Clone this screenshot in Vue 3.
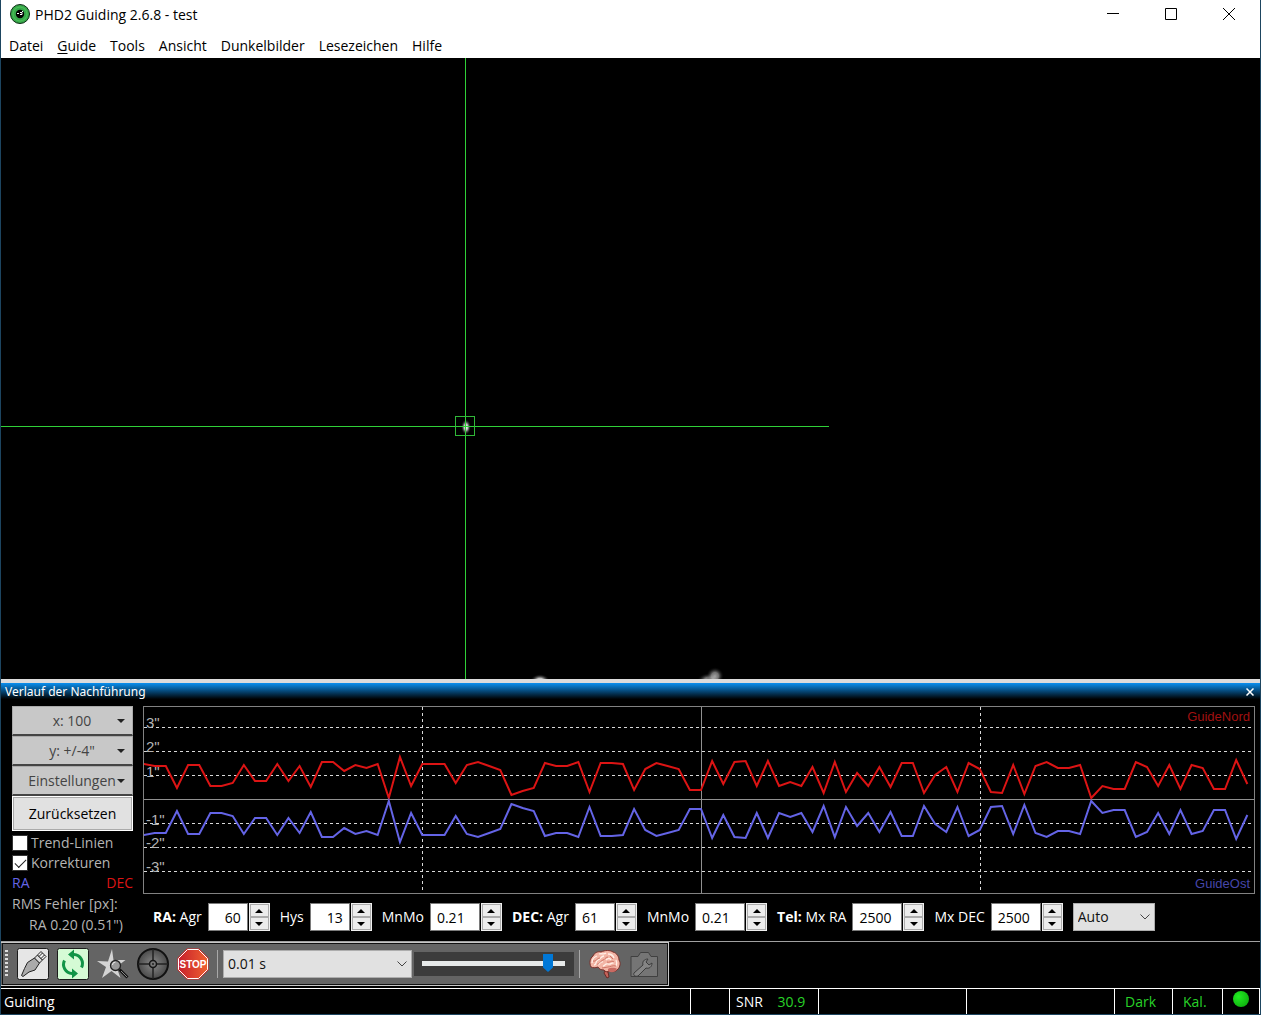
<template>
  <div class="window">
    <header class="title-bar">
      <svg class="app-icon" viewBox="0 0 20 20" aria-hidden="true">
        <circle cx="10" cy="10" r="9.5" fill="#36a84a" stroke="#0d2b14" />
        <circle cx="10" cy="10" r="7" fill="none" stroke="#4fc25a" />
        <circle cx="10" cy="10" r="4.2" fill="#000" />
        <path d="M7 9.500h2M10 8.500h2v2h-2M12 7.500h1" stroke="#fff" fill="none" />
      </svg>
      <h1>PHD2 Guiding 2.6.8 - test</h1>
      <div class="window-buttons">
        <button type="button" aria-label="Minimieren">
          <svg viewBox="0 0 12 12"><path d="M0 5.500h12" /></svg>
        </button>
        <button type="button" aria-label="Maximieren">
          <svg viewBox="0 0 12 12"><path d="M.5.5h11v11H.5z" /></svg>
        </button>
        <button type="button" aria-label="Schließen">
          <svg viewBox="0 0 12 12"><path d="M0 0l12 12M12 0L0 12" /></svg>
        </button>
      </div>
    </header>

    <nav class="menu-bar">
      <button type="button">Datei</button>
      <button type="button"><u>G</u>uide</button>
      <button v-for="item in menuItems" :key="item" type="button">{{ item }}</button>
    </nav>

    <main class="camera-view">
      <svg class="camera-image" role="img" aria-label="Kamerabild">
        <defs>
          <radialGradient id="star">
            <stop offset="0" stop-color="#fff" />
            <stop offset="0.4" stop-color="#bbb" />
            <stop offset="1" stop-color="#000" stop-opacity="0" />
          </radialGradient>
        </defs>
        <ellipse cx="465" cy="369" rx="5" ry="8" fill="url(#star)" />
        <svg y="100%" overflow="visible">
          <ellipse cx="539" cy="2" rx="10" ry="7" fill="url(#star)" />
          <ellipse cx="708" cy="1" rx="12" ry="7" fill="url(#star)" opacity="0.6" />
          <ellipse cx="714" cy="-3" rx="9" ry="9" fill="url(#star)" opacity="0.6" />
        </svg>
        <rect class="cross" x="0" y="368" width="828" height="1" />
        <rect class="cross" x="464" y="0" width="1" height="100%" />
        <rect class="lock-box" x="454.5" y="358.5" width="19" height="19" />
      </svg>
    </main>

    <section class="history">
      <div class="caption">
        <h2>Verlauf der Nachführung</h2>
        <button type="button" aria-label="Bereich schließen">
          <svg viewBox="0 0 8 8"><path d="M.5.5l7 7M7.500.5l-7 7" /></svg>
        </button>
      </div>

      <div class="history-body">
        <aside class="side">
          <button v-for="label in dropButtons" :key="label" type="button" class="drop-button">
            <span>{{ label }}</span>
            <svg viewBox="0 0 8 4"><path d="M0 0h8L4 4z" /></svg>
          </button>
          <button type="button" class="reset-button">Zurücksetzen</button>
          <label class="check"><input v-model="trendLines" type="checkbox" />Trend-Linien</label>
          <label class="check"><input v-model="corrections" type="checkbox" />Korrekturen</label>
          <div class="legend"><span class="ra">RA</span><span class="dec">DEC</span></div>
          <p>RMS Fehler [px]:</p>
          <p class="rms">RA 0.20 (0.51")</p>
          <p class="rms rms-dec">DEC 0.20 (0.51")</p>
        </aside>

        <div class="graph-column">
          <svg class="graph" role="img" aria-label="Verlauf RA und DEC">
            <svg width="100%" height="186" viewBox="0 0 1110 186" preserveAspectRatio="none">
              <path class="dashed" d="M278.500 0V186M836.500 0V186" />
              <path class="axis" d="M557.500 0V186" />
            </svg>
            <line v-for="y in gridLines" :key="y" class="dashed" x1="0" :y1="y" x2="100%" :y2="y" />
            <line class="axis" x1="0" y1="92.5" x2="100%" y2="92.5" />
            <text v-for="t in scaleLabels" :key="t.text" class="scale" x="2" :y="t.y">{{ t.text }}</text>
            <svg width="100%" height="186" viewBox="0 0 1110 186" preserveAspectRatio="none">
              <polyline class="dec-line" :points="decPoints" />
              <polyline class="ra-line" :points="raPoints" />
            </svg>
            <text class="direction dec" x="100%" y="14" dx="-4">GuideNord</text>
            <text class="direction ra" x="100%" y="181" dx="-4">GuideOst</text>
          </svg>

          <form class="settings" @submit.prevent>
            <div v-for="field in fields" :key="field.id" class="field">
              <label :for="field.id"><b v-if="field.group">{{ field.group }}</b>{{ field.label }}</label>
              <input
                :id="field.id"
                v-model="field.value"
                type="text"
                :class="[field.size, { right: field.right }]"
              />
              <div class="spin">
                <button type="button" :aria-label="field.label + ' erhöhen'">
                  <svg viewBox="0 0 8 4"><path d="M0 4h8L4 0z" /></svg>
                </button>
                <button type="button" :aria-label="field.label + ' verringern'">
                  <svg viewBox="0 0 8 4"><path d="M0 0h8L4 4z" /></svg>
                </button>
              </div>
            </div>
            <div class="select mode">
              <select aria-label="DEC Modus">
                <option>Auto</option>
              </select>
              <svg viewBox="0 0 10 6"><path d="M.5.5L5 5L9.500.5" /></svg>
            </div>
          </form>
        </div>
      </div>
    </section>

    <div class="toolbar">
      <span class="grip"></span>
      <div class="tools">
        <button type="button" aria-label="Verbinden">
          <svg viewBox="0 0 32 32">
            <rect x=".5" y=".5" width="31" height="31" rx="2" fill="#e6e6e6" stroke="#1c1c1c" />
            <g stroke="#222" stroke-linejoin="round">
              <path d="M4.500 27.500l3-7 3-6 7-4.500 5 5-4.500 7-6 2-6 4.500z" fill="#aaa" />
              <path d="M17.500 10l3-3 5 5-3 3z" fill="#ddd" />
              <path d="M20.500 7l3.500-3.500 5 5-3.500 3.500zM22 8.500l3.500-3.500M24 10.500l3.500-3.500" fill="#f2f2f2" />
            </g>
          </svg>
        </button>
        <button type="button" aria-label="Belichtung wiederholen">
          <svg viewBox="0 0 32 32">
            <rect x=".5" y=".5" width="31" height="31" rx="2" fill="#d5fbd5" stroke="#1c1c1c" />
            <g fill="none" stroke="#119447" stroke-width="3">
              <path d="M15 6.500h2a9 9 0 0 1 7.500 13" />
              <path d="M17 25.500h-2a9 9 0 0 1-7.500-13" />
            </g>
            <path d="M17 1.500v10l-6-5zM15 30.500v-10l6 5z" fill="#119447" />
          </svg>
        </button>
        <button type="button" aria-label="Leitstern wählen">
          <svg viewBox="0 0 32 32">
            <path d="M15 1l1.500 11 12 0-9 7 4 11-9-7-9.500 7 4-11-9-6 11 .5z" fill="#d4d4d4" />
            <circle cx="18.500" cy="17.500" r="5" fill="#999" stroke="#222" stroke-width="1.300" />
            <path d="M15.500 17a3 3 0 0 1 3-3" fill="none" stroke="#eee" />
            <path d="M22.500 21.500l8 8" stroke="#111" stroke-width="3" />
            <path d="M24 23l6 6" stroke="#888" />
          </svg>
        </button>
        <button type="button" aria-label="Nachführen">
          <svg viewBox="0 0 32 32">
            <defs>
              <radialGradient id="reticle">
                <stop offset="0" stop-color="#8a8a8a" />
                <stop offset="1" stop-color="#4a4a4a" />
              </radialGradient>
            </defs>
            <circle cx="16" cy="16" r="15" fill="url(#reticle)" stroke="#111" stroke-width="2" />
            <path d="M16 1v30M1 16h30" stroke="#222" stroke-width="1.500" />
            <circle cx="16" cy="16" r="3.500" fill="#777" stroke="#151515" stroke-width="1.500" />
            <circle cx="16" cy="16" r="1" fill="#222" />
          </svg>
        </button>
        <button type="button" aria-label="Stopp">
          <svg viewBox="0 0 32 32">
            <defs>
              <linearGradient id="stop-fill">
                <stop offset="0" stop-color="#c8202c" />
                <stop offset="1" stop-color="#ee6030" />
              </linearGradient>
            </defs>
            <path d="M10 .5h12l9.500 9.500v12L22 31.500H10L.5 22V10z" fill="#d42a2a" />
            <path
              d="M10.500 1.500h11l9 9v11l-9 9h-11l-9-9v-11z"
              fill="url(#stop-fill)"
              stroke="#fff"
            />
            <text class="stop-text" x="16" y="20">STOP</text>
          </svg>
        </button>
      </div>
      <span class="separator"></span>
      <div class="select exposure">
        <select aria-label="Belichtungszeit">
          <option>0.01 s</option>
        </select>
        <svg viewBox="0 0 10 6"><path d="M.5.5L5 5L9.500.5" /></svg>
      </div>
      <div class="gamma">
        <input v-model="gamma" type="range" min="0" max="100" aria-label="Gamma" />
      </div>
      <span class="separator"></span>
      <div class="tools tools-end">
        <button type="button" aria-label="Erweiterte Einstellungen">
          <svg viewBox="0 0 32 32">
            <path
              d="M16 23l3 1 1 5-2 1-3-5z"
              fill="#c4635a"
              stroke="#5c1d1a"
              stroke-width=".8"
            />
            <path
              d="M2 19C0 15 1 10 4 8c1-3 5-5 8-4 4-2 9-2 12 0 4 1 6 5 6 8 2 3 1 7-1 9-2 3-6 3-8 2-3 1-5 1-6-1-3 0-5-1-6-3-3 1-5 1-7 0z"
              fill="#f3b5a6"
              stroke="#7a2f2a"
            />
            <path d="M19 21c3-2 8-1 9 0-2 4-6 4-9 2z" fill="#c96a62" />
            <g fill="none" stroke="#fff0e8" stroke-width="1.300">
              <path d="M3 15c0-4 2-6 5-7M5 17c3 0 1-4 4-5s3-4 6-4M9 17c2-1 2-4 5-3M10 6c3-1 5 1 7-1M19 6c3 0 5 1 6 4M14 18c2 0 2-3 5-2s4-2 6-1M17 12c2-2 4-2 5 0M27 12c1 2 1 4 0 6" />
            </g>
            <g fill="none" stroke="#cf7465">
              <path d="M4 13c3 1 4-3 7-3M8 16c2 1 3-3 6-4 2 0 2-3 5-3M13 20c2 0 4-1 6-1s5-2 8-1M18 14c3 1 4-2 7 0M21 8l3 3" />
            </g>
          </svg>
        </button>
        <button type="button" aria-label="Kameraeinstellungen">
          <svg viewBox="0 0 32 32">
            <path
              d="M2 8.500h7l2.500-4h8l2.500 4h6.500v20H2z"
              fill="#757575"
              stroke="#404040"
              stroke-linejoin="round"
            />
            <path
              d="M5 25l9-8c-1-3 1-6 5-6l-2 3 3 3 3-2c0 4-3 6-6 5l-8 8c-3 1-5-1-4-3z"
              fill="#858585"
              stroke="#3c3c3c"
            />
          </svg>
        </button>
      </div>
    </div>

    <footer class="status-bar">
      <span class="message">Guiding</span>
      <span class="w-small"></span>
      <span class="w-snr">SNR <em>30.9</em></span>
      <span class="w-large"></span>
      <span class="w-large"></span>
      <span class="w-dark"><em>Dark</em></span>
      <span class="w-cal"><em>Kal.</em></span>
      <span class="w-led"><i></i></span>
    </footer>
  </div>
</template>

<script setup>
import { computed, reactive, ref } from 'vue'

const menuItems = ['Tools', 'Ansicht', 'Dunkelbilder', 'Lesezeichen', 'Hilfe']
const dropButtons = ['x: 100', 'y: +/-4"', 'Einstellungen']

const trendLines = ref(false)
const corrections = ref(true)
const gamma = ref(91)

const fields = reactive([
  { id: 'ra-agr', group: 'RA: ', label: 'Agr', value: '60', size: 'short', right: true },
  { id: 'ra-hys', label: 'Hys', value: '13', size: 'short', right: true },
  { id: 'ra-mnmo', label: 'MnMo', value: '0.21', size: 'long' },
  { id: 'dec-agr', group: 'DEC: ', label: 'Agr', value: '61', size: 'short' },
  { id: 'dec-mnmo', label: 'MnMo', value: '0.21', size: 'long' },
  { id: 'mx-ra', group: 'Tel: ', label: 'Mx RA', value: '2500', size: 'long' },
  { id: 'mx-dec', label: 'Mx DEC', value: '2500', size: 'long' },
])

const gridLines = [20.5, 44.5, 68.5, 116.5, 140.5, 164.5]
const scaleLabels = [
  { text: '3"', y: 21 },
  { text: '2"', y: 45 },
  { text: '1"', y: 70 },
  { text: '-1"', y: 118 },
  { text: '-2"', y: 141 },
  { text: '-3"', y: 165 },
]

// DEC samples in graph units, RA runs mirrored around the zero line
const samples = [
  58, 60, 60, 82, 59, 59, 80, 80, 77, 59, 75, 75, 58, 75, 60, 81, 56, 56, 65, 59,
  62, 58, 92, 51, 80, 58, 58, 58, 77, 59, 56, 60, 64, 89, 85, 82, 57, 60, 60, 56,
  86, 57, 57, 58, 84, 63, 57, 60, 63, 84, 84, 55, 78, 56, 55, 80, 55, 80, 76, 80,
  61, 87, 56, 86, 67, 80, 61, 81, 57, 57, 87, 69, 61, 86, 57, 63, 86, 87, 59, 88,
  60, 56, 62, 62, 59, 92, 80, 83, 83, 56, 61, 80, 59, 83, 59, 62, 83, 83, 54, 78,
]
const step = 11.15

const decPoints = computed(() => samples.map((y, i) => `${i * step - 0.5},${y - 1}`).join(' '))
const raPoints = computed(() => samples.map((y, i) => `${i * step - 0.5},${186 - y}`).join(' '))
</script>

<style>
body {
  margin: 0;
  background: #000;
}
</style>

<style scoped>
* {
  box-sizing: border-box;
}

.window {
  display: flex;
  flex-direction: column;
  height: 100vh;
  border: 1px solid #1d4560;
  border-top: 0;
  background: #000;
  color: #fff;
  font-family: "Open Sans", "Noto Sans", sans-serif;
  font-size: 14px;
  line-height: 20px;
}

button,
input,
select {
  font: inherit;
  border-radius: 0;
}

button {
  padding: 0;
  border: 0;
  background: none;
  color: inherit;
}

h1,
h2,
p {
  margin: 0;
  font-size: inherit;
  font-weight: 400;
}

svg {
  display: block;
}

/* title and menu */
.title-bar {
  display: flex;
  align-items: center;
  height: 28px;
  padding: 0 2px 0 9px;
  background: #fff;
  color: #000;
}

.title-bar h1 {
  padding-top: 1px;
}

.app-icon {
  width: 20px;
  height: 20px;
  margin-right: 5px;
}

.window-buttons {
  display: flex;
  margin-left: auto;
}

.window-buttons button {
  display: grid;
  place-items: center;
  width: 58px;
  height: 28px;
}

.window-buttons svg {
  width: 12px;
  height: 12px;
  stroke: #000;
  fill: none;
}

.menu-bar {
  display: flex;
  gap: 14px;
  align-items: center;
  height: 30px;
  padding: 6px 8px 0;
  background: #fff;
  color: #000;
}

.menu-bar u {
  text-underline-offset: 2px;
}

/* camera image */
.camera-view {
  flex: 1;
  min-height: 0;
}

.camera-image {
  width: 100%;
  height: 100%;
}

.cross {
  fill: #30d038;
}

.lock-box {
  fill: none;
  stroke: #30b838;
}

/* history pane */
.history {
  border-top: 4px solid #dcdcdc;
  border-bottom: 1px solid #a0a0a0;
}

.caption {
  display: flex;
  align-items: center;
  justify-content: space-between;
  height: 18px;
  padding: 0 6px 0 4px;
  background: linear-gradient(#0a90f0, #000 90%);
}

.caption h2 {
  font-family: "Noto Sans", sans-serif;
  font-size: 12px;
}

.caption svg {
  width: 8px;
  height: 8px;
  stroke: #fff;
  stroke-width: 1.5;
}

.history-body {
  display: flex;
  gap: 10px;
  height: 240px;
  padding: 5px 5px 0 11px;
  overflow: hidden;
}

.side {
  width: 121px;
  flex: none;
  color: #b4b4b4;
}

.drop-button {
  display: flex;
  align-items: center;
  width: 100%;
  height: 30px;
  padding: 1px 7px 0 0;
  border: 1px solid #aaa;
  border-bottom: 2px solid #444;
  background: #c8c8c8;
  color: #444;
}

.drop-button span {
  flex: 1;
  padding-left: 14px;
  white-space: nowrap;
}

.drop-button svg {
  width: 8px;
  height: 4px;
  fill: #222;
}

.reset-button {
  width: 100%;
  height: 35px;
  border: 1px solid #fff;
  outline: 1px solid #aaa;
  outline-offset: -2px;
  background: #e1e1e1;
  color: #000;
}

.check {
  display: flex;
  align-items: center;
  gap: 3px;
  height: 20px;
}

.reset-button + .check {
  margin-top: 2px;
}

.check input {
  appearance: none;
  width: 16px;
  height: 16px;
  margin: 0;
  border: 1px solid #333;
  background: #fff;
}

.check input:checked::before {
  content: "";
  display: block;
  width: 10px;
  height: 5px;
  margin: 3px 2px;
  border: solid #222;
  border-width: 0 0 1px 1px;
  transform: rotate(-45deg);
}

.legend {
  display: flex;
  justify-content: space-between;
}

.legend .ra {
  color: #6464e6;
}

.legend .dec {
  color: #dc1414;
}

.side p {
  line-height: 21px;
  white-space: nowrap;
}

.side .rms {
  padding-left: 17px;
}

.side .rms-dec {
  padding-left: 9px;
}

.graph-column {
  flex: 1;
  min-width: 0;
}

.graph {
  width: 100%;
  height: 188px;
  border: 1px solid #828282;
}

.dashed,
.axis {
  fill: none;
  stroke: #d8d8d8;
  shape-rendering: crispEdges;
  vector-effect: non-scaling-stroke;
}

.dashed {
  stroke-dasharray: 3 3;
}

.axis {
  stroke: #909090;
}

.dec-line,
.ra-line {
  fill: none;
  stroke: #dc1414;
  stroke-width: 2;
  vector-effect: non-scaling-stroke;
}

.ra-line {
  stroke: #6464e6;
}

.scale {
  fill: #b4b4b4;
  font: 15px "Liberation Sans", sans-serif;
}

.direction {
  font: 13px "Liberation Sans", sans-serif;
  text-anchor: end;
}

.direction.dec {
  fill: #a01010;
}

.direction.ra {
  fill: #4646aa;
}

.settings {
  display: flex;
  gap: 10px;
  padding: 9px 0 0 10px;
}

.field {
  display: flex;
  align-items: center;
}

.field label {
  margin-right: 6px;
  white-space: pre;
}

.field input {
  height: 28px;
  padding: 0 6px;
  border: 1px solid #7a7a7a;
  background: #fff;
  color: #000;
}

.field .short {
  width: 40px;
}

.field .long {
  width: 50px;
}

.field .right {
  text-align: right;
}

.spin {
  display: grid;
  width: 21px;
  height: 28px;
  margin-left: 1px;
  border: 1px solid #f0f0f0;
}

.spin button {
  display: grid;
  place-items: center;
  border: 1px solid #acacac;
  background: #ececec;
}

.spin svg {
  width: 8px;
  height: 4px;
}

.select {
  display: grid;
  align-items: center;
}

.select select,
.select svg {
  grid-area: 1 / 1;
}

.select select {
  appearance: none;
  width: 100%;
  height: 28px;
  padding: 0 4px;
  border: 1px solid #adadad;
  background: #e1e1e1;
  color: #111;
}

.select svg {
  justify-self: end;
  width: 10px;
  height: 6px;
  margin-right: 5px;
  fill: none;
  stroke: #444;
  pointer-events: none;
}

.mode {
  width: 82px;
}

/* toolbar */
.toolbar {
  display: flex;
  align-items: center;
  align-self: flex-start;
  height: 44px;
  margin-bottom: 2px;
  padding: 0 7px 0 4px;
  border: 1px solid #c8c8c8;
  border-left: 0;
  outline: 1px solid #111;
  outline-offset: -2px;
  background: #646464;
}

.grip {
  width: 3px;
  height: 28px;
  margin-right: 9px;
  background: repeating-linear-gradient(#ddd 0 2px, #646464 2px 4px);
}

.tools {
  display: flex;
  gap: 8px;
}

.tools svg {
  width: 32px;
  height: 32px;
}

.tools-end {
  margin-left: 9px;
}

.stop-text {
  fill: #fff;
  font: bold 10px "Liberation Sans", sans-serif;
  text-anchor: middle;
}

.separator {
  width: 1px;
  height: 28px;
  background: #a8a8a8;
}

.tools + .separator {
  margin: 0 5px 0 8px;
}

.exposure {
  width: 189px;
}

.gamma {
  display: flex;
  align-items: center;
  width: 160px;
  height: 24px;
  margin: 0 5px 0 2px;
  padding: 0 9px 0 8px;
  background: #3c3c3c;
}

.gamma input {
  appearance: none;
  width: 100%;
  height: 18px;
  margin: 0 0 2px;
  background: linear-gradient(#e7eaea, #e7eaea) center / 100% 5px no-repeat;
}

.gamma input::-webkit-slider-thumb {
  appearance: none;
  width: 10px;
  height: 18px;
  background: #0078d7;
  clip-path: polygon(0 0, 100% 0, 100% 75%, 50% 100%, 0 75%);
}

/* status bar */
.status-bar {
  display: flex;
  height: 26px;
  border-top: 1px solid #fff;
}

.status-bar span {
  flex: none;
  padding: 3px 0 0 10px;
  border-right: 1px solid #fff;
}

.status-bar .message {
  flex: 1;
  padding-left: 3px;
}

.status-bar em {
  color: #28d228;
  font-style: normal;
}

.w-small {
  width: 39px;
}

.status-bar .w-snr {
  width: 89px;
  padding-left: 6px;
}

.w-snr em {
  margin-left: 11px;
}

.w-large {
  width: 148px;
}

.w-dark {
  width: 58px;
}

.w-cal {
  width: 50px;
}

.status-bar .w-led {
  width: 37px;
  padding-top: 2px;
}

.w-led i {
  display: block;
  width: 16px;
  height: 16px;
  border-radius: 50%;
  background: radial-gradient(circle at 35% 35%, #22ee22, #0aa00a);
}
</style>
